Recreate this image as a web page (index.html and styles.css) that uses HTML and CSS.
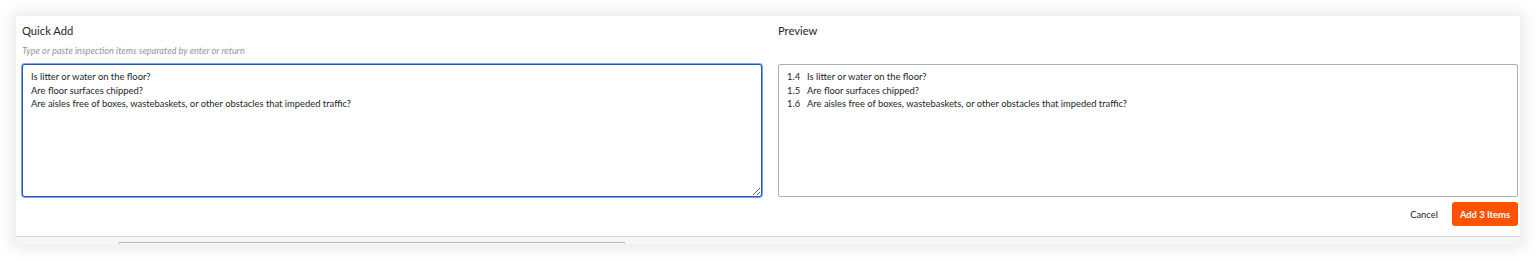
FILE: index.html
```html
<!DOCTYPE html>
<html>
<head>
<meta charset="utf-8">
<link rel="stylesheet" href="styles.css">
</head>
<body>
<div class="page">
  <div class="card">
    <div class="content">
      <div class="cols">
        <div class="col">
          <div class="title">Quick Add</div>
          <div class="hint">Type or paste inspection items separated by enter or return</div>
          <textarea class="input">Is litter or water on the floor?
Are floor surfaces chipped?
Are aisles free of boxes, wastebaskets, or other obstacles that impeded traffic?</textarea>
        </div>
        <div class="col">
          <div class="title">Preview</div>
          <div class="hint"></div>
          <div class="preview">
            <div class="row"><span class="num">1.4</span><span>Is litter or water on the floor?</span></div>
            <div class="row"><span class="num">1.5</span><span>Are floor surfaces chipped?</span></div>
            <div class="row"><span class="num">1.6</span><span>Are aisles free of boxes, wastebaskets, or other obstacles that impeded traffic?</span></div>
          </div>
        </div>
      </div>
      <div class="actions">
        <button class="cancel">Cancel</button>
        <button class="primary">Add 3 Items</button>
      </div>
    </div>
    <div class="strip">
      <div class="ghost-input"></div>
    </div>
  </div>
</div>
</body>
</html>
```
FILE: styles.css
```css
html, body {
  margin: 0;
  padding: 0;
  background: #ffffff;
}
body {
  font-family: Lato, "Open Sans", sans-serif;
  color: #232729;
}
.page {
  padding: 16px 17px 17px 16px;
}
.card {
  width: 1504px;
  height: 228px;
  background: #ffffff;
  box-shadow: 0 0 14px 4px rgba(0, 0, 0, 0.09);
  display: flex;
  flex-direction: column;
  overflow: hidden;
}
.content {
  flex: 1;
  padding: 8px 2px 0 6px;
  border-bottom: 1px solid #d6dbdd;
  display: flex;
  flex-direction: column;
}
.cols {
  display: grid;
  grid-template-columns: 740px 740px;
  column-gap: 16px;
}
.col {
  display: flex;
  flex-direction: column;
}
.title {
  font-size: 11.2px;
  line-height: 14px;
  height: 14px;
  color: #232729;
}
.hint {
  font-size: 9.2px;
  font-style: italic;
  color: #8d979c;
  line-height: 12px;
  height: 12px;
  margin-top: 7px;
}
.input {
  margin: 7px 0 0 0;
  box-sizing: border-box;
  width: 740px;
  height: 133px;
  border: 1px solid #1d58c4;
  box-shadow: 0 0 0 1px rgba(29, 88, 196, 0.55);
  border-radius: 3px;
  padding: 5px 8px;
  font-family: Lato, "Open Sans", sans-serif;
  font-size: 9.4px;
  line-height: 13.5px;
  color: #232729;
  resize: both;
  outline: none;
}
.preview {
  margin-top: 7px;
  box-sizing: border-box;
  height: 133px;
  border: 1px solid #a8b1b5;
  border-radius: 2px;
  padding: 5px 8px;
  font-size: 9.4px;
  line-height: 13.5px;
}
.row {
  display: flex;
}
.num {
  width: 20px;
  flex: none;
}
.actions {
  display: flex;
  justify-content: flex-end;
  align-items: center;
  gap: 6px;
  margin-top: 5px;
}
.cancel {
  background: none;
  border: none;
  font-family: Lato, "Open Sans", sans-serif;
  font-size: 9.4px;
  color: #232729;
  padding: 6px 8px;
}
.primary {
  background: #ff5200;
  color: #ffffff;
  border: none;
  border-radius: 3px;
  font-family: Lato, "Open Sans", sans-serif;
  font-weight: 700;
  font-size: 9.4px;
  height: 24px;
  padding: 0 8px;
}
.strip {
  height: 7px;
  background: #f5f7f7;
  padding-left: 102px;
  padding-top: 5px;
  box-sizing: border-box;
}
.ghost-input {
  width: 505px;
  height: 6px;
  border: 1px solid #b0b5b7;
  border-bottom: none;
  border-radius: 2px 2px 0 0;
  background: #ffffff;
}
```
